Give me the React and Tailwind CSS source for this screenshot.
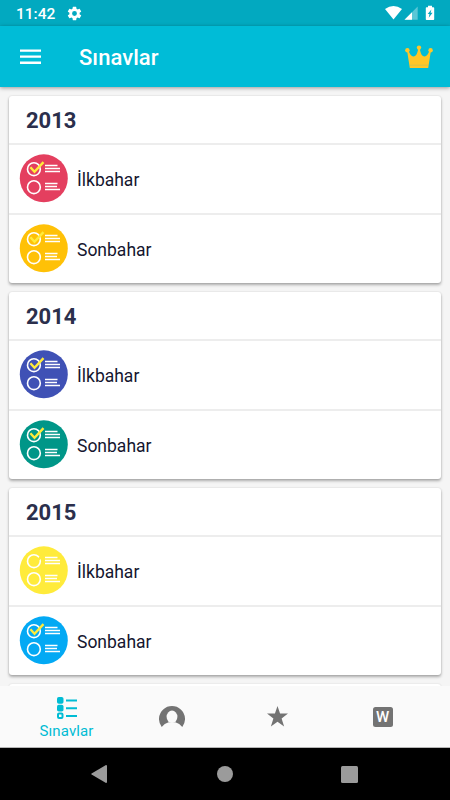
const exams = [
  { year: '2013', rows: [['İlkbahar', '#e43f5f'], ['Sonbahar', '#ffc107']] },
  { year: '2014', rows: [['İlkbahar', '#3f51b5'], ['Sonbahar', '#009688']] },
  { year: '2015', rows: [['İlkbahar', '#ffeb3b'], ['Sonbahar', '#03a9f4']] },
];

function ExamIcon({ color }) {
  return (
    <svg width="48" height="48" viewBox="0 0 48 48" fill="none" className="shrink-0 overflow-visible">
      <circle cx="23.8" cy="24.3" r="24" fill={color} />
      <g stroke="#fff" strokeWidth="1.6">
        <circle cx="13.9" cy="15.2" r="6.4" />
        <circle cx="13.9" cy="33.2" r="6.4" />
      </g>
      <path
        d="M25 11.5h12.5M25 14.5h15M25 17.5h15M25 29.5h12.5M25 32.5h12M25 35.5h15"
        stroke="#fff"
        strokeWidth="1.4"
      />
      <path d="M10.4 13.3l4.1 4.4 9-9.6" stroke="#ffeb3b" strokeWidth="2.4" />
    </svg>
  );
}

function ExamCard({ year, rows }) {
  return (
    <section className="shrink-0 rounded-[3px] bg-white shadow-[0_2px_3px_rgba(0,0,0,0.3),0_0_2px_rgba(0,0,0,0.14)]">
      <h2 className="flex h-[47px] items-center pt-[3px] pl-[17px] text-[22px] leading-none font-bold text-[#2b2f4c]">
        {year}
      </h2>
      {rows.map(([label, color]) => (
        <div key={label} className="flex h-[70px] items-center gap-[9px] border-t-2 border-[#ededed] pb-0.5 pl-[11px]">
          <ExamIcon color={color} />
          <span className="pt-[5px] text-[17.5px] leading-none text-[#15162f]">{label}</span>
        </div>
      ))}
    </section>
  );
}

function StatusBar() {
  return (
    <div className="flex h-[26px] shrink-0 items-center justify-between bg-[#02a9c0] pr-[15px] pl-4 text-white">
      <div className="flex items-center gap-[11px]">
        <span className="pt-[4px] text-[15.5px] leading-none font-medium">11:42</span>
        <svg width="15" height="15" viewBox="1.5 1.5 21 21" fill="#fff" className="ml-px">
          <path d="M19.14 12.94c.04-.3.06-.61.06-.94s-.02-.64-.07-.94l2.03-1.58a.49.49 0 0 0 .12-.61l-1.92-3.32a.49.49 0 0 0-.59-.22l-2.39.96a7 7 0 0 0-1.62-.94l-.36-2.54a.48.48 0 0 0-.48-.41h-3.84a.48.48 0 0 0-.47.41l-.36 2.54a7.3 7.3 0 0 0-1.62.94l-2.39-.96a.48.48 0 0 0-.59.22L2.74 8.87a.48.48 0 0 0 .12.61l2.03 1.58a7 7 0 0 0 0 1.88l-2.03 1.58a.49.49 0 0 0-.12.61l1.92 3.32c.12.22.37.29.59.22l2.39-.96c.5.38 1.03.7 1.62.94l.36 2.54c.05.24.24.41.48.41h3.84c.24 0 .44-.17.47-.41l.36-2.54a7.3 7.3 0 0 0 1.62-.94l2.39.96c.22.08.47 0 .59-.22l1.92-3.32a.48.48 0 0 0-.12-.61zM12 15.4a3.4 3.4 0 1 1 0-6.8 3.4 3.4 0 0 1 0 6.8z" />
        </svg>
      </div>
      <svg width="50" height="16" viewBox="0 0 50 16" fill="#fff">
        <path d="M0 4Q8.5-2.2 17 4L8.5 14.4z" />
        <path d="M32.7 1.6V14.7H19.5z" opacity=".35" />
        <path d="M27 7.2v7.5h-7.5z" />
        <path
          fillRule="evenodd"
          d="M43 .8h4v1.4h1.4q.8 0 .8.7v11.3q0 .8-.8.8h-6.8q-.8 0-.8-.8V2.9q0-.7.8-.7H43zM46.4 4.5l-3.7 4.6h1.8l-.8 3.6 3.9-4.9h-2z"
        />
      </svg>
    </div>
  );
}

function Header() {
  return (
    <header className="z-10 flex h-[61px] shrink-0 items-center bg-[#00bcd7] pr-[16px] pl-5 shadow-[0_1px_4px_rgba(0,0,0,0.38)]">
      <svg width="21" height="16" viewBox="0 0 21 16" fill="#fff">
        <path d="M0 .4h21v2.3H0zM0 6.5h21v2.3H0zM0 12.6h21v2.3H0z" />
      </svg>
      <h1 className="ml-[38px] grow pt-[3px] text-[22px] leading-none font-medium tracking-[0.05px] text-white">
        Sınavlar
      </h1>
      <svg width="30" height="24" viewBox="0 0 30 24" fill="#ffc627">
        <path d="M3 5.3H4.4C5.6 9.2 7.4 11.4 9.4 11.4C11.8 11.4 13.6 8.4 14.2 3.4H15.8C16.4 8.4 18.2 11.4 20.6 11.4C22.6 11.4 24.4 9.2 25.6 5.3H27L24.2 22.9H5.8z" />
        <path d="M6 20.2h18" stroke="#b9c35c" strokeWidth=".6" />
        <circle cx="15" cy="2.6" r="2.2" />
        <circle cx="3.4" cy="5.3" r="2.2" />
        <circle cx="26.6" cy="5.3" r="2.2" />
      </svg>
    </header>
  );
}

function BottomNav() {
  return (
    <nav className="z-10 flex h-[62px] shrink-0 border-b border-[#b5b5b5] bg-[#fafafa] pr-[14px] pl-[14px] text-[#737373]">
      <div className="flex w-[105px] flex-col items-center pt-[11px] text-[#00bcd4]">
        <svg width="20" height="23" viewBox="0 0 20 23" fill="currentColor">
          <rect x="0" y="0" width="6.5" height="6.8" rx="1.8" />
          <rect x="0" y="7.7" width="6.5" height="6.8" rx="1.8" />
          <rect x="1" y="16.6" width="4.5" height="4.5" rx="1" fill="none" stroke="currentColor" strokeWidth="2" />
          <path d="M9 2.4h11v2H9zM9 10.2h11v2H9zM9 18h11v2H9z" />
        </svg>
        <span className="mt-[2px] text-[15px] leading-[18px] tracking-[0.1px]">Sınavlar</span>
      </div>
      <div className="flex w-[106px] items-center justify-center">
        <svg width="26" height="22" viewBox="0 0 26 22">
          <path d="M2.7 21A13 13 0 1 1 23.3 21Q20.6 17.2 16.4 16.2H9.6Q5.4 17.2 2.7 21z" fill="#737373" />
          <ellipse cx="13" cy="10.8" rx="5.4" ry="6.2" fill="#fafafa" />
        </svg>
      </div>
      <div className="flex w-[105px] items-center justify-center">
        <svg width="21" height="21" viewBox="0 0 20 20" fill="currentColor">
          <path d="M10 0l2.45 7.2H20l-6.1 4.6 2.4 7.7-6.3-4.6-6.3 4.6 2.4-7.7L0 7.2h7.55z" />
        </svg>
      </div>
      <div className="flex w-[105px] items-center justify-center">
        <span className="flex size-5 items-center justify-center rounded-[2.5px] bg-[#737373] pt-px text-[15px] leading-none font-medium text-white">
          W
        </span>
      </div>
    </nav>
  );
}

function SystemNav() {
  return (
    <div className="flex h-[52px] shrink-0 items-center justify-between bg-black pr-[92px] pl-[91px] text-[#9b9b9b]">
      <svg width="16" height="18" viewBox="0 0 16 18" fill="currentColor">
        <path d="M15 0q1 0 1 1v16q0 1-1 1L.6 9.6q-.8-.6 0-1.2z" />
      </svg>
      <span className="ml-0.5 size-4 rounded-full bg-[#9b9b9b]" />
      <span className="size-[17px] rounded-[1.5px] bg-[#9b9b9b]" />
    </div>
  );
}

export default function App() {
  return (
    <div className="flex h-[800px] w-[450px] flex-col overflow-hidden bg-[#f5f5f5] font-[Roboto,sans-serif]">
      <StatusBar />
      <Header />
      <main className="flex min-h-0 grow flex-col gap-[9px] overflow-hidden px-[9px] pt-[9px]">
        {exams.map((exam) => (
          <ExamCard key={exam.year} {...exam} />
        ))}
        <div className="h-12 shrink-0 rounded-[3px] bg-white shadow-[0_0_2px_rgba(0,0,0,0.14)]" />
      </main>
      <BottomNav />
      <SystemNav />
    </div>
  );
}
